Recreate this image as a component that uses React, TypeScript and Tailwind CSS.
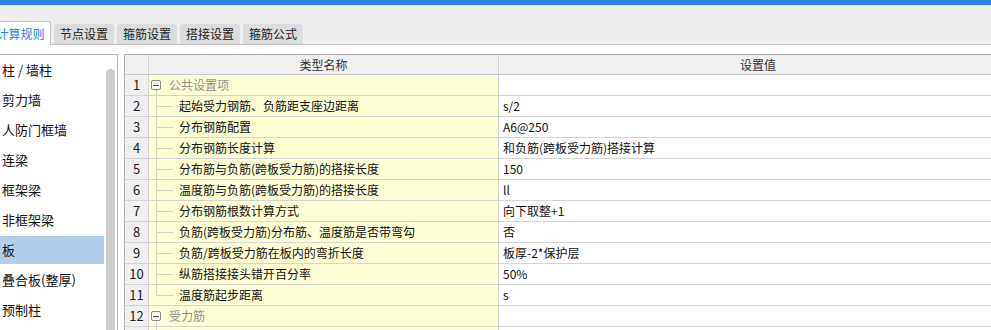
import React from 'react';

const TABS = ['节点设置', '箍筋设置', '搭接设置', '箍筋公式'];

const ITEMS = ['柱 / 墙柱', '剪力墙', '人防门框墙', '连梁', '框架梁', '非框架梁', '板', '叠合板(整厚)', '预制柱'];

type Row = { name: string; value?: string; group?: boolean; last?: boolean };

const ROWS: Row[] = [
  { name: '公共设置项', group: true },
  { name: '起始受力钢筋、负筋距支座边距离', value: 's/2' },
  { name: '分布钢筋配置', value: 'A6@250' },
  { name: '分布钢筋长度计算', value: '和负筋(跨板受力筋)搭接计算' },
  { name: '分布筋与负筋(跨板受力筋)的搭接长度', value: '150' },
  { name: '温度筋与负筋(跨板受力筋)的搭接长度', value: 'll' },
  { name: '分布钢筋根数计算方式', value: '向下取整+1' },
  { name: '负筋(跨板受力筋)分布筋、温度筋是否带弯勾', value: '否' },
  { name: '负筋/跨板受力筋在板内的弯折长度', value: '板厚-2*保护层' },
  { name: '纵筋搭接接头错开百分率', value: '50%' },
  { name: '温度筋起步距离', value: 's', last: true },
  { name: '受力筋', group: true },
];

function MinusBox() {
  return (
    <div className="absolute left-[2px] top-[5px] w-[10px] h-[10px] border border-[#8c8c8c] rounded-[2px] bg-white flex items-center justify-center">
      <div className="w-[6px] h-px bg-[#555]" />
    </div>
  );
}

function NameCell({ row }: { row: Row }) {
  return (
    <div className="relative w-[350px] h-full border-r border-[#d4d4d4] bg-[#ffffd4]">
      {row.group ? (
        <>
          <MinusBox />
          <div className="absolute left-[7px] top-[15px] bottom-0 w-px bg-[#d2d2c0]" />
          <span className="absolute left-[20px] top-0 leading-[20px] text-[#8f8f8f]">{row.name}</span>
        </>
      ) : (
        <>
          <div className={`absolute left-[7px] top-0 w-px bg-[#d2d2c0] ${row.last ? 'h-[10px]' : 'bottom-0'}`} />
          <div className="absolute left-[7px] top-[10px] w-[17px] h-px bg-[#d2d2c0]" />
          <span className="absolute left-[30px] top-0 leading-[20px] text-[#111] whitespace-nowrap">{row.name}</span>
        </>
      )}
    </div>
  );
}

export default function App() {
  return (
    <div className="w-[991px] h-[330px] overflow-hidden bg-[#efefef] font-['Noto_Sans_CJK_SC',sans-serif] text-[12px]">
      <div className="h-[5px] bg-[#2b80e0]" />

      {/* tabs */}
      <div className="h-[39px] flex items-end gap-[3px] ml-[-10px]">
        <div className="relative z-10 w-[61px] h-[24px] mb-[-1px] bg-white border border-b-0 border-[#c8c8c8] rounded-t-[3px] flex items-center justify-center text-[#2b80e0]">
          计算规则
        </div>
        {TABS.map(t => (
          <div key={t} className="w-[60px] h-[20px] bg-[#dcdcdc] rounded-t-[3px] flex items-center justify-center text-[#222]">
            {t}
          </div>
        ))}
      </div>

      <div className="h-[286px] bg-white border-t border-[#c8c8c8] pt-[9px] flex">
        {/* left list */}
        <div className="w-[118px] h-full border-t border-r border-[#b8b8b8] flex">
          <div className="w-[104px] flex flex-col">
            {ITEMS.map(it => (
              <div key={it} className="h-[30px] py-px shrink-0">
                <div className={`h-full pl-[2px] flex items-center text-[13px] text-[#111] ${it === '板' ? 'bg-[#b3cdeb]' : ''}`}>
                  {it}
                </div>
              </div>
            ))}
          </div>
          <div className="w-[13px] pl-[2px] pt-[14px]">
            <div className="w-[9px] h-full bg-[#cdcdcd] rounded-t-full" />
          </div>
        </div>

        {/* table */}
        <div className="ml-[6px] w-[893px] h-full border-t border-l border-[#b0b0b0] flex flex-col">
          <div className="h-[20px] shrink-0 flex bg-[#f0f0f0] border-b border-[#c8c8c8] text-[#333]">
            <div className="w-[24px] border-r border-[#d4d4d4]" />
            <div className="w-[350px] border-r border-[#d4d4d4] flex items-center justify-center">类型名称</div>
            <div className="w-[518px] flex items-center justify-center">设置值</div>
          </div>
          {ROWS.map((row, i) => (
            <div key={i} className="h-[21px] shrink-0 flex border-b border-[#d4d4d4]">
              <div className="w-[24px] bg-[#f0f0f0] border-r border-[#d4d4d4] flex items-center justify-center text-[13px] text-[#222]">
                {i + 1}
              </div>
              <NameCell row={row} />
              <div className="w-[518px] pl-[4px] flex items-center text-[#111]">{row.value}</div>
            </div>
          ))}
          {/* partially visible next row */}
          <div className="h-[21px] shrink-0 flex">
            <div className="w-[24px] bg-[#f0f0f0] border-r border-[#d4d4d4]" />
            <div className="relative w-[350px] h-full border-r border-[#d4d4d4] bg-[#ffffd4]">
              <div className="absolute left-[7px] top-0 bottom-0 w-px bg-[#d2d2c0]" />
            </div>
            <div className="w-[518px]" />
          </div>
        </div>
      </div>
    </div>
  );
}
